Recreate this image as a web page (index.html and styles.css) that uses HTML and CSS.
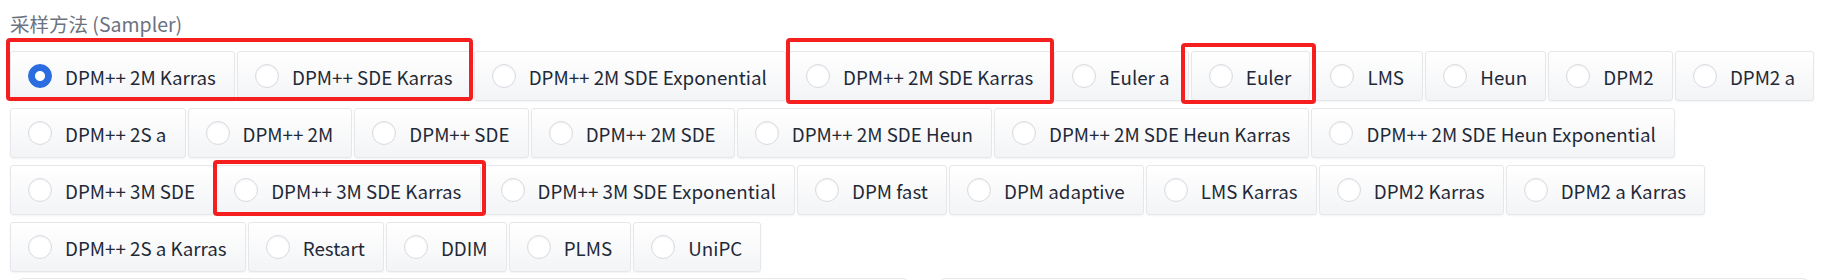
FILE: index.html
```html
<!DOCTYPE html>
<html lang="zh-CN">
<head>
    <meta charset="UTF-8">
    <meta name="viewport" content="width=device-width, initial-scale=1.0">
    <title>采样方法</title>
    <link rel="stylesheet" href="styles.css">
</head>
<body>

<div class="bloco-sampler">
    <span class="rotulo">采样方法 (Sampler)</span>

    <div class="opcoes">
        <label class="opcao"><input type="radio" name="sampler" checked><span>DPM++ 2M Karras</span></label>
        <label class="opcao"><input type="radio" name="sampler"><span>DPM++ SDE Karras</span></label>
        <label class="opcao"><input type="radio" name="sampler"><span>DPM++ 2M SDE Exponential</span></label>
        <label class="opcao"><input type="radio" name="sampler"><span>DPM++ 2M SDE Karras</span></label>
        <label class="opcao"><input type="radio" name="sampler"><span>Euler a</span></label>
        <label class="opcao"><input type="radio" name="sampler"><span>Euler</span></label>
        <label class="opcao"><input type="radio" name="sampler"><span>LMS</span></label>
        <label class="opcao"><input type="radio" name="sampler"><span>Heun</span></label>
        <label class="opcao"><input type="radio" name="sampler"><span>DPM2</span></label>
        <label class="opcao"><input type="radio" name="sampler"><span>DPM2 a</span></label>
        <label class="opcao"><input type="radio" name="sampler"><span>DPM++ 2S a</span></label>
        <label class="opcao"><input type="radio" name="sampler"><span>DPM++ 2M</span></label>
        <label class="opcao"><input type="radio" name="sampler"><span>DPM++ SDE</span></label>
        <label class="opcao"><input type="radio" name="sampler"><span>DPM++ 2M SDE</span></label>
        <label class="opcao"><input type="radio" name="sampler"><span>DPM++ 2M SDE Heun</span></label>
        <label class="opcao"><input type="radio" name="sampler"><span>DPM++ 2M SDE Heun Karras</span></label>
        <label class="opcao"><input type="radio" name="sampler"><span>DPM++ 2M SDE Heun Exponential</span></label>
        <label class="opcao"><input type="radio" name="sampler"><span>DPM++ 3M SDE</span></label>
        <label class="opcao"><input type="radio" name="sampler"><span>DPM++ 3M SDE Karras</span></label>
        <label class="opcao"><input type="radio" name="sampler"><span>DPM++ 3M SDE Exponential</span></label>
        <label class="opcao"><input type="radio" name="sampler"><span>DPM fast</span></label>
        <label class="opcao"><input type="radio" name="sampler"><span>DPM adaptive</span></label>
        <label class="opcao"><input type="radio" name="sampler"><span>LMS Karras</span></label>
        <label class="opcao"><input type="radio" name="sampler"><span>DPM2 Karras</span></label>
        <label class="opcao"><input type="radio" name="sampler"><span>DPM2 a Karras</span></label>
        <label class="opcao"><input type="radio" name="sampler"><span>DPM++ 2S a Karras</span></label>
        <label class="opcao"><input type="radio" name="sampler"><span>Restart</span></label>
        <label class="opcao"><input type="radio" name="sampler"><span>DDIM</span></label>
        <label class="opcao"><input type="radio" name="sampler"><span>PLMS</span></label>
        <label class="opcao"><input type="radio" name="sampler"><span>UniPC</span></label>
    </div>

    <div class="paineis">
        <div class="painel painel-1"></div>
        <div class="painel painel-2"></div>
    </div>

    <!-- marcacoes vermelhas por cima da imagem -->
    <div class="marca marca-1"></div>
    <div class="marca marca-2"></div>
    <div class="marca marca-3"></div>
    <div class="marca marca-4"></div>
</div>

</body>
</html>
```

FILE: styles.css
```css
body {
    margin: 0;
    background-color: #ffffff;
    font-family: "Noto Sans CJK SC", "Noto Sans", sans-serif;
}

.bloco-sampler {
    position: relative;
    padding: 9px 10px 0 10px;
    height: 271px;
    overflow: hidden;
}

.rotulo {
    display: block;
    font-size: 19.5px;
    line-height: 29px;
    color: #6b7280;
    margin-bottom: 13px;
}

.opcoes {
    display: flex;
    flex-wrap: wrap;
    column-gap: 2px;
    row-gap: 7px;
}

.opcao {
    display: flex;
    align-items: center;
    gap: 13px;
    box-sizing: border-box;
    height: 50px;
    padding: 0 18.2px 0 17px;
    border: 1px solid #e5e7eb;
    border-radius: 3px;
    background: linear-gradient(to bottom, #ffffff, #f3f4f6);
    box-shadow: 0 1px 2px rgba(0, 0, 0, 0.05);
    font-size: 18.75px;
    color: #1f2937;
    white-space: nowrap;
    cursor: pointer;
}

.opcao input {
    appearance: none;
    -webkit-appearance: none;
    margin: 0;
    width: 24px;
    height: 24px;
    flex-shrink: 0;
    border: 1px solid #d7dae0;
    border-radius: 50%;
    background: #ffffff;
    box-shadow: inset 0 1px 2px rgba(0, 0, 0, 0.06);
}

.opcao input:checked {
    border-color: #2b6de0;
    background: radial-gradient(circle, #ffffff 0, #ffffff 4.5px, #2b6de0 5.5px);
    box-shadow: none;
}

.paineis {
    display: flex;
    gap: 28px;
    margin-top: 6px;
    padding-left: 6px;
}

.painel {
    height: 40px;
    border: 1px solid #e5e7eb;
    border-radius: 8px;
    box-shadow: 0 1px 2px rgba(0, 0, 0, 0.04);
}

.painel-1 {
    width: 892px;
}

.painel-2 {
    width: 870px;
}

.marca {
    position: absolute;
    box-sizing: border-box;
    border: 4px solid #f51f1f;
    border-radius: 4px;
}

.marca-1 {
    left: 6px;
    top: 38px;
    width: 467px;
    height: 63px;
}

.marca-2 {
    left: 786px;
    top: 38px;
    width: 268px;
    height: 66px;
}

.marca-3 {
    left: 1181px;
    top: 43px;
    width: 135px;
    height: 61px;
}

.marca-4 {
    left: 213px;
    top: 160px;
    width: 273px;
    height: 56px;
}
```
